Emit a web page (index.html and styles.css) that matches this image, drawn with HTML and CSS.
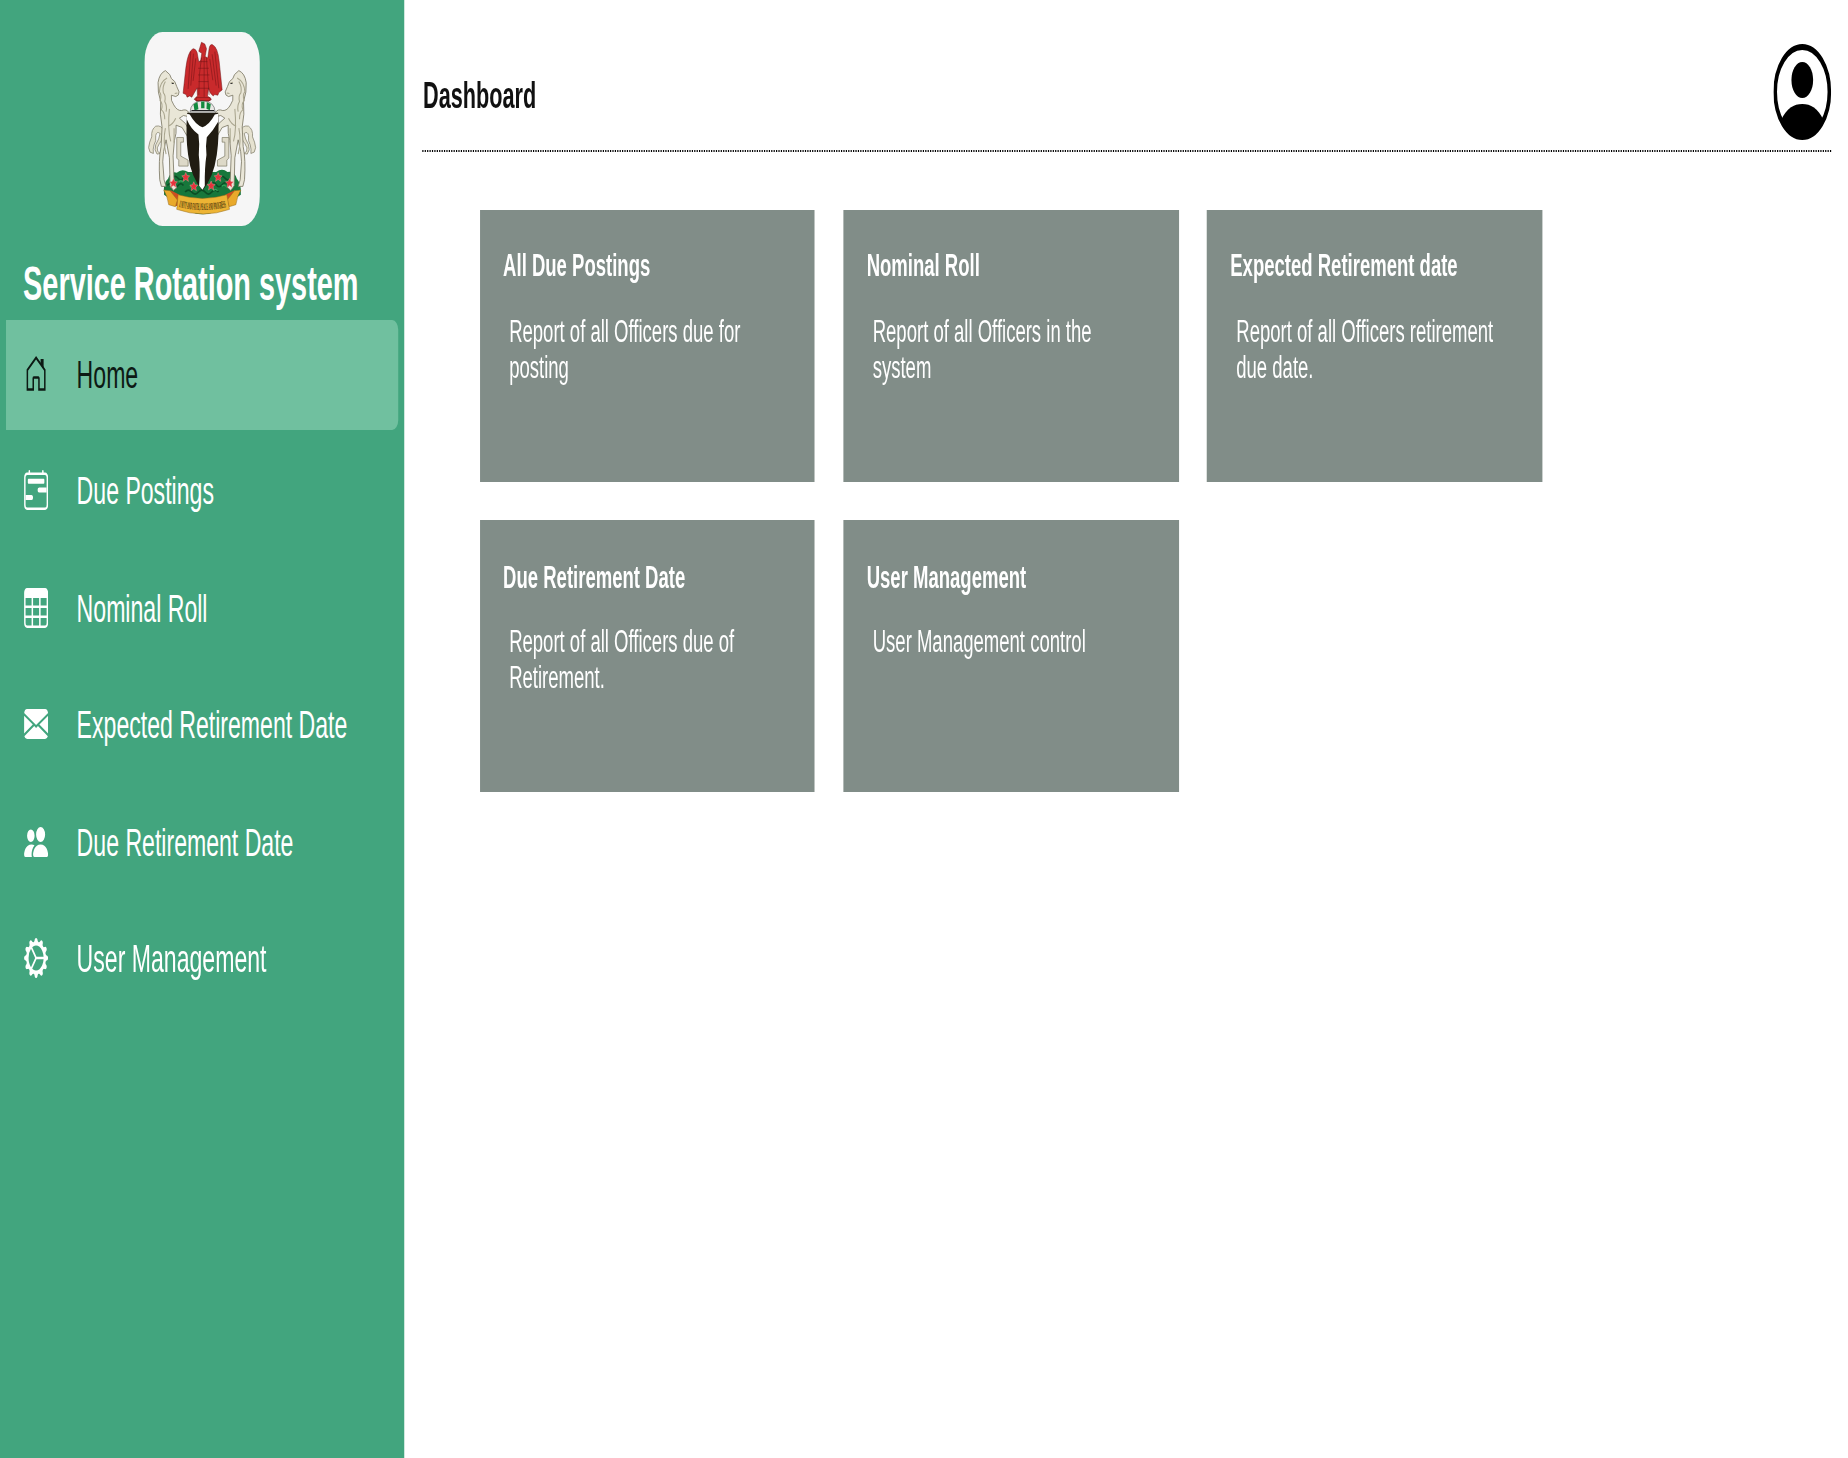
FILE: index.html
```html
<!DOCTYPE html>
<html lang="en">
<head>
<meta charset="utf-8">
<title>Service Rotation system</title>
<link rel="stylesheet" href="styles.css">
</head>
<body>
<div class="app">
  <aside class="sidebar">
    <svg class="crest" viewBox="43 31 346 583" preserveAspectRatio="none">
      <rect x="43" y="31" width="346" height="583" fill="#f6f6f6"/>
      <!-- eagle -->
      <g fill="#c92a2c" stroke="#6d1214" stroke-width="1.5">
        <path d="M214 62l10 5l5 14l-4 24l8 4l4-28q2-14 10-12q16 8 20 50l9 86l-10 8l-3 8l-9-2l-5 4l-8-8l-6-14l-3 22l12 10l-8 6h-36l-8-6l10-10l-1-24l-8 14l-8 14l-6-4l-8 4l-3-8l-9-4l8-74q6-52 22-60q8 0 12 12l5 28l6-6l3-20l-9-6z"/>
        <path d="M182 90l-8 112M190 96l-8 96M197 110l-8 68M254 90l12 110M246 98l12 94M239 112l9 64M214 108l-6 50l-2 62M222 106v120M229 108l4 60l4 52M208 120h24M204 140h32M204 160h34M205 180h30M202 200h36" fill="none"/>
        <path d="M198 228h42v9h-42z"/>
      </g>
      <!-- wreath -->
      <path d="M180 271q2-32 37-33q36 1 38 33z" fill="#e8e8e4" stroke="#333" stroke-width="1.5"/>
      <path d="M190 248l12-7l3 22l-12 4zM213 240h10v20h-10zM230 241l12 7l-3 18l-10-4z" fill="#128a3e"/>
      <path d="M184 267h68" stroke="#222" stroke-width="3"/>
      <!-- scroll stands -->
      <path d="M140 348h20v14h-8v42l22 12v18h-28v-18l-6-6zM296 348h-20v14h8v42l-22 12v18h28v-18l6-6z" fill="#ddd9c8" stroke="#77745f" stroke-width="2"/>
      <!-- grassy mound -->
      <path d="M102 520q-4-36 12-48q8-24 26-18q16-14 34-2h84q18-14 34 0q20-6 28 20q14 14 12 48l-62 40q-56 36-110 0z" fill="#17773b"/>
      <path d="M190 570q27 16 56 0l-4 6q-25 6-48 0z" fill="#17773b"/>
      <path d="M112 492q8-10 16 0t16 0t16 0M125 470q10-10 18 0t18 0M240 490q10-12 18 0t18 0t18 0M268 470q8-10 16 0t20 0M165 512q10-12 20 0t20 0t20 0t20 0t20 0" fill="none" stroke="#0b4d25" stroke-width="5"/>
      <path d="M118 480q6-8 12 0M146 482q6-8 12 0M180 498q6-8 12 0M250 508q6-8 12 0M275 495q6-8 12 0M300 470q6-8 12 0" fill="none" stroke="#36a65b" stroke-width="4"/>
      <!-- horses -->
      <g id="crest-horse">
        <path d="M70 396l-10-4q-8-12-1-30l6-16q-2-22 12-32q18-4 23 14q0 26-12 38q-10 14-5 24l8 6l-10 2q-10-12-4-28q11-18 13-34q-10-8-13 6q2 18-5 28q-4 14-2 26z" fill="#e6e2d0" stroke="#77745f" stroke-width="2"/>
        <path d="M119 159l5 12q12 6 16 24l7 16q0 12-10 14l-13-4q-3 16 7 29q10 18 23 17q16-6 22 6l-2 12l-14-3l-12 8l18 16l14 26l-2 14l-8-4l-14-24l-18-7q2 26-5 46l-4 46l3 78l8 18l-10 8l-10-14l-2-84l-10-54q-10 38-10 66l4 54l6 20h-14l-5-20q-4-60 4-100l3-58q-8-40-4-76q-10-30-8-58q4-28 22-36z" fill="#e9e6d7" stroke="#77745f" stroke-width="2.400"/>
        <path d="M111 169q-22 12-23 42q8 8 2 26q10 10 4 28q10 6 10 28M106 180q-10 16-6 34q8 8 4 26q8 14 4 30M118 262q-6 60 4 98M137 290q-8 18-23 24M132 320v44M106 320q-8 38 2 78M124 182l8 3M134 216l8-2" fill="none" stroke="#aaa68f" stroke-width="3.200"/>
        <path d="M125 186h6" stroke="#333" stroke-width="3"/>
      </g>
      <use href="#crest-horse" transform="translate(432 0) scale(-1 1)"/>
      <!-- shield -->
      <path d="M171 274h93q4 70-4 126q-10 70-43 107q-34-37-43-107q-8-56-3-126z" fill="#211c12"/>
      <path d="M171 277l8 2q18 32 38 38q20-6 37-38l10-2v24q-14 26-34 46q-4 24-1 54q-6 40-5 92l-7 12l-10-12q4-50-1-92q3-34-1-62q-24-18-35-46z" fill="#fff"/>
      <!-- flowers -->
      <g fill="#e5323b" stroke="#f8b8ba" stroke-width="1">
        <path id="crest-flower" d="M167 453l4 9l8 1l-6 7l2 10l-8-6l-8 6l2-10l-6-7l8-1z"/>
        <use href="#crest-flower" x="-37" y="18"/><use href="#crest-flower" x="24" y="28"/><use href="#crest-flower" x="76" y="26"/><use href="#crest-flower" x="97"/><use href="#crest-flower" x="131" y="18"/>
      </g>
      <!-- motto ribbon -->
      <path d="M120 506l28 14l-4 34h-16l6-10zM315 506l-30 14l5 34h16l-6-10z" fill="#cf4c21"/>
      <path d="M101 506l19 2l22 28l-6 20l-20-6q-4-26-15-44zM332 506l-19 2l-22 28l6 20l20-6q4-26 15-44z" fill="#e9a92b" stroke="#94691b" stroke-width="1.500"/>
      <path d="M144 520q73 22 146 0l8 44q-78 28-158 0z" fill="#edb434" stroke="#94691b" stroke-width="1.500"/>
      <path id="crest-motto" d="M146 557q71 18 145 0" fill="none"/>
      <text class="motto"><textPath href="#crest-motto" textLength="144" lengthAdjust="spacingAndGlyphs">UNITY AND FAITH, PEACE AND PROGRESS</textPath></text>
    </svg>
    <h1 class="brand">Service Rotation system</h1>
    <nav class="menu">
      <a class="item active"><svg class="icon" viewBox="0 0 16 16"><path d="M2.2 14.2V6.4L8 1.500l5.800 4.900v7.800H9.900v-4.400a.4.4 0 0 0-.4-.4h-3a.4.4 0 0 0-.4.4v4.400z" fill="none" stroke="currentColor"/><path d="M11 2h2v4l-2-2z"/></svg><span class="label">Home</span></a>
      <a class="item"><svg class="icon" viewBox="0 0 16 16"><path fill-rule="evenodd" d="M3.500 0a.5.5 0 0 1 .5.5V1h8V.5a.5.5 0 0 1 1 0V1h1a2 2 0 0 1 2 2v11a2 2 0 0 1-2 2H2a2 2 0 0 1-2-2V3a2 2 0 0 1 2-2h1V.5a.5.5 0 0 1 .5-.5zM2 2a1 1 0 0 0-1 1v11a1 1 0 0 0 1 1h12a1 1 0 0 0 1-1V3a1 1 0 0 0-1-1z"/><path d="M2.500 4a.5.5 0 0 1 .5-.5h10a.5.5 0 0 1 .5.5v1a.5.5 0 0 1-.5.5H3a.5.5 0 0 1-.5-.5zM9 8a1 1 0 0 1 1-1h5v2h-5a1 1 0 0 1-1-1zM1 10h4a1 1 0 1 1 0 2H1z"/></svg><span class="label">Due Postings</span></a>
      <a class="item"><svg class="icon" viewBox="0 0 16 16"><path fill-rule="evenodd" d="M0 2a2 2 0 0 1 2-2h12a2 2 0 0 1 2 2v12a2 2 0 0 1-2 2H2a2 2 0 0 1-2-2zm15 2h-4v3h4zm0 4h-4v3h4zm0 4h-4v3h3a1 1 0 0 0 1-1zm-5 3v-3H6v3zm-5 0v-3H1v2a1 1 0 0 0 1 1zm-4-4h4V8H1zm0-4h4V4H1zm5-3v3h4V4zm4 4H6v3h4z"/></svg><span class="label">Nominal Roll</span></a>
      <a class="item"><svg class="icon" viewBox="0 0 16 16"><path d="M.05 3.555A2 2 0 0 1 2 2h12a2 2 0 0 1 1.950 1.555L8 8.414zM0 4.697v7.104l5.803-3.558zM6.761 8.830l-6.570 4.027A2 2 0 0 0 2 14h12a2 2 0 0 0 1.808-1.144l-6.570-4.027L8 9.586zm3.436-.586L16 11.801V4.697z"/></svg><span class="label">Expected Retirement Date</span></a>
      <a class="item"><svg class="icon" viewBox="0 0 16 16"><path d="M7 14s-1 0-1-1 1-4 5-4 5 3 5 4-1 1-1 1zM11 8a3 3 0 1 0 0-6 3 3 0 0 0 0 6zM5.216 14A2.238 2.238 0 0 1 5 13c0-1.355.68-2.750 1.936-3.720A6.325 6.325 0 0 0 5 9c-4 0-5 3-5 4s1 1 1 1zM4.500 8a2.500 2.500 0 1 0 0-5 2.500 2.500 0 0 0 0 5z"/></svg><span class="label">Due Retirement Date</span></a>
      <a class="item"><svg class="icon" viewBox="0 0 16 16"><path fill-rule="evenodd" d="M7.068.727c.243-.97 1.620-.97 1.864 0l.071.286a.96.96 0 0 0 1.622.434l.205-.211c.695-.719 1.888-.03 1.613.931l-.08.284a.96.96 0 0 0 1.187 1.187l.283-.081c.96-.275 1.650.918.931 1.613l-.211.205a.96.96 0 0 0 .434 1.622l.286.071c.97.243.97 1.620 0 1.864l-.286.071a.96.96 0 0 0-.434 1.622l.211.205c.719.695.03 1.888-.931 1.613l-.284-.08a.96.96 0 0 0-1.187 1.187l.081.283c.275.96-.918 1.650-1.613.931l-.205-.211a.96.96 0 0 0-1.622.434l-.071.286c-.243.97-1.620.97-1.864 0l-.071-.286a.96.96 0 0 0-1.622-.434l-.205.211c-.695.719-1.888.03-1.613-.931l.08-.284a.96.96 0 0 0-1.186-1.187l-.284.081c-.96.275-1.650-.918-.931-1.613l.211-.205a.96.96 0 0 0-.434-1.622l-.286-.071c-.97-.243-.97-1.620 0-1.864l.286-.071a.96.96 0 0 0 .434-1.622l-.211-.205c-.719-.695-.03-1.888.931-1.613l.284.08a.96.96 0 0 0 1.187-1.186l-.081-.284c-.275-.96.918-1.650 1.613-.931l.205.211a.96.96 0 0 0 1.622-.434zM12.973 8.500H8.250l-2.834 3.779A4.998 4.998 0 0 0 12.973 8.500zm0-1a4.998 4.998 0 0 0-7.557-3.779l2.834 3.780zM4.617 4.322A4.984 4.984 0 0 0 3.002 8c0 1.455.622 2.765 1.615 3.678L7.375 8z"/></svg><span class="label">User Management</span></a>
    </nav>
  </aside>
  <main class="main">
    <header class="topbar">
      <h2 class="page-title">Dashboard</h2>
      <svg class="avatar" viewBox="-24 -24 48 48"><circle r="22.500" fill="#fff" stroke="#000" stroke-width="3"/><circle cy="-6" r="9"/><path d="M-17.500 14C-13 8 -7 6 0 6S13 8 17.500 14A22.500 22.500 0 0 1-17.500 14z"/></svg>
    </header>
    <section class="cards">
      <article class="card"><h3>All Due Postings</h3><p>Report of all Officers due for posting</p></article>
      <article class="card"><h3>Nominal Roll</h3><p>Report of all Officers in the system</p></article>
      <article class="card"><h3>Expected Retirement date</h3><p>Report of all Officers retirement due date.</p></article>
      <article class="card"><h3>Due Retirement Date</h3><p>Report of all Officers due of Retirement.</p></article>
      <article class="card"><h3>User Management</h3><p>User Management control</p></article>
    </section>
  </main>
</div>
</body>
</html>
```
FILE: styles.css
```css
* { box-sizing: border-box; margin: 0; padding: 0; }
html, body { width: 1848px; height: 1458px; overflow: hidden; background: #fff; }
body { font-family: "Liberation Sans", Arial, sans-serif; }

.app {
  display: flex;
  width: 1536px;
  height: 729px;
  transform: scale(1.203125, 2);
  transform-origin: 0 0;
}

.sidebar {
  display: flex;
  flex-direction: column;
  width: 335.800px;
  padding: 15.500px 5px 0;
  background: #42a57e;
  color: #fff;
}
.crest {
  display: block;
  width: 96px;
  height: 97px;
  margin: 0 auto;
  border-radius: 15px;
}
.motto { font: bold 30px "Liberation Serif", serif; fill: #3c2a08; }
.brand {
  height: 47.500px;
  padding: 15.500px 0 0 14.200px;
  font-size: 24px;
  line-height: 28px;
  white-space: nowrap;
}
.menu { display: flex; flex-direction: column; gap: 4px; }
.item {
  display: flex;
  align-items: center;
  gap: 23.700px;
  height: 54.500px;
  padding-left: 15px;
  border-radius: 0 5px 5px 0;
  font-size: 19.200px;
  white-space: nowrap;
}
.item.active { background: #70c09f; color: #0d1a14; }
.label { padding-top: 1px; }
.icon { width: 20px; height: 20px; margin-bottom: .6px; fill: currentColor; }
.item.active .icon { margin-bottom: 0; }

.main { flex: 1; padding: 0 14px 0 15px; }
.topbar {
  display: flex;
  align-items: center;
  justify-content: space-between;
  height: 76px;
  padding-top: 17px;
  border-bottom: 1px dotted #000;
}
.page-title { padding: 3.500px 0 0 .8px; font-size: 18px; line-height: 22px; color: #111; }
.avatar { width: 48px; height: 48px; }

.cards {
  display: grid;
  grid-template-columns: repeat(3, 278.500px);
  grid-auto-rows: 136px;
  gap: 19.200px 23.700px;
  padding: 29.200px 0 0 48.200px;
}
.card { padding: 19.200px 19.200px 0; background: #818d88; color: #fff; }
.card h3 { font-size: 15.400px; line-height: 18px; }
.card p { width: 228px; padding: 14.700px 0 0 5px; font-size: 15.400px; line-height: 18px; }
```
